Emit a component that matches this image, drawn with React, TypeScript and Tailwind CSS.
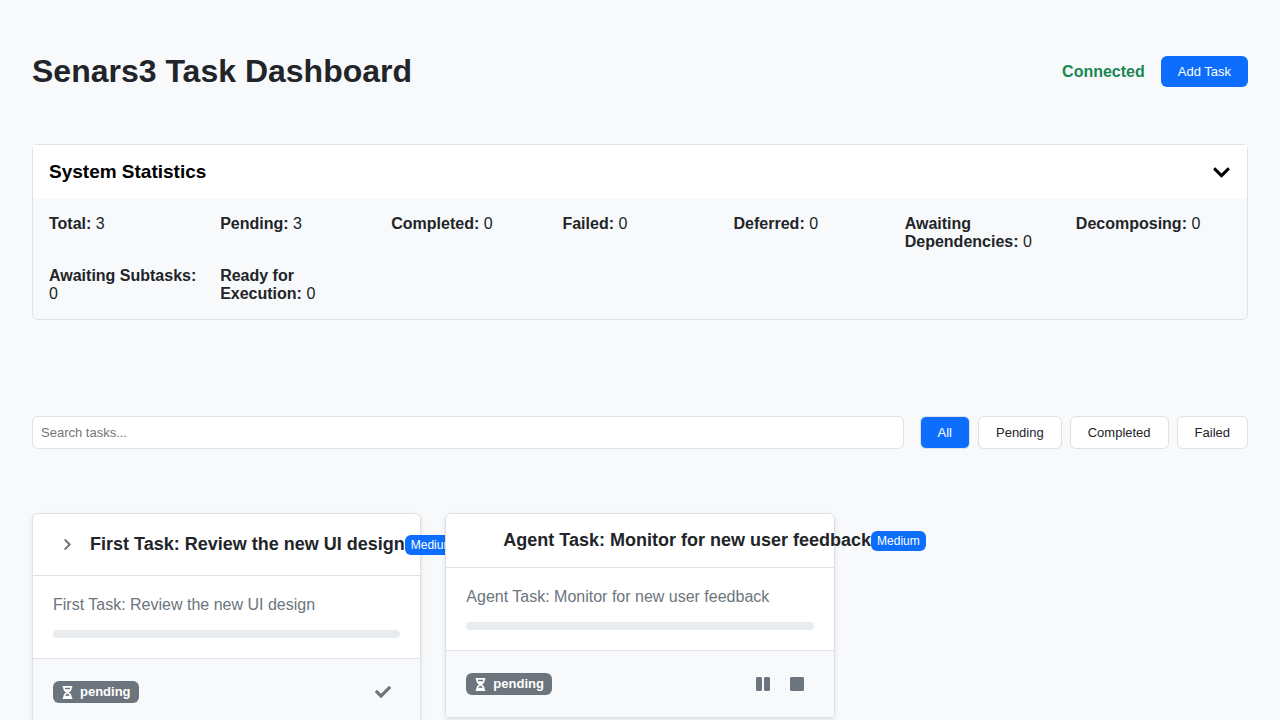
import { useState } from "react";
import {
  FaCheck,
  FaChevronDown,
  FaChevronRight,
  FaHourglassHalf,
  FaPause,
  FaStop,
} from "react-icons/fa";

const stats = [
  { label: "Total", value: 3 },
  { label: "Pending", value: 3 },
  { label: "Completed", value: 0 },
  { label: "Failed", value: 0 },
  { label: "Deferred", value: 0 },
  { label: "Awaiting Dependencies", value: 0 },
  { label: "Decomposing", value: 0 },
  { label: "Awaiting Subtasks", value: 0 },
  { label: "Ready for Execution", value: 0 },
];

const filters = ["All", "Pending", "Completed", "Failed"];

type Task = {
  title: string;
  priority: string;
  status: string;
  kind: "regular" | "agent";
};

const tasks: Task[] = [
  {
    title: "First Task: Review the new UI design",
    priority: "Medium",
    status: "pending",
    kind: "regular",
  },
  {
    title: "Agent Task: Monitor for new user feedback",
    priority: "Medium",
    status: "pending",
    kind: "agent",
  },
];

const iconButton = "flex size-[34px] items-center justify-center text-[#6c757d]";

function TaskCard({ task }: { task: Task }) {
  const agent = task.kind === "agent";
  return (
    <article className="relative min-w-0 rounded-md border border-[#dee2e6] bg-white shadow-[0_2px_4px_rgba(0,0,0,0.1)]">
      <header className="flex items-center border-b border-[#dee2e6] px-5 py-4">
        {agent ? (
          <span className="w-[37px] shrink-0" />
        ) : (
          <button
            type="button"
            aria-label="Expand subtasks"
            className="mr-2 flex h-[29px] w-[29px] shrink-0 items-center justify-center text-[13px] text-[#6c757d]"
          >
            <FaChevronRight />
          </button>
        )}
        <h3 className="text-[18px] leading-[21px] font-bold whitespace-nowrap">{task.title}</h3>
        <span className="shrink-0 rounded-md bg-[#0d6efd] px-1.5 py-[3px] text-[12px] leading-[14px] text-white">
          {task.priority}
        </span>
      </header>
      <div className="p-5">
        <p className="mb-4 leading-[18px] text-[#6c757d]">{task.title}</p>
        <div className="h-2 rounded bg-[#e9ecef]" />
      </div>
      <footer className="flex items-center justify-between border-t border-[#dee2e6] bg-[#f8f9fa] px-5 py-4">
        <span className="flex h-[22px] items-center gap-1.5 rounded-md bg-[#6c757d] px-2 text-[13px] font-bold text-white">
          <FaHourglassHalf />
          {task.status}
        </span>
        <div className="flex">
          {agent ? (
            <>
              <button type="button" aria-label="Pause" className={iconButton}>
                <FaPause />
              </button>
              <button type="button" aria-label="Stop" className={iconButton}>
                <FaStop />
              </button>
            </>
          ) : (
            <button type="button" aria-label="Complete" className={iconButton}>
              <FaCheck />
            </button>
          )}
        </div>
      </footer>
    </article>
  );
}

export default function App() {
  const [active, setActive] = useState("All");
  const [open, setOpen] = useState(true);

  return (
    <div className="min-h-screen bg-[#f8f9fa] p-8 font-['Liberation_Sans',Arial,sans-serif] text-[16px] leading-[18px] text-[#212529]">
      <header className="mb-[33px] flex items-center justify-between py-[21px]">
        <h1 className="text-[32px] leading-[37px] font-bold">Senars3 Task Dashboard</h1>
        <div className="flex items-center gap-4">
          <span className="font-bold text-[#198754]">Connected</span>
          <button
            type="button"
            className="rounded-md bg-[#0d6efd] px-[17px] py-2 text-[13px] leading-[15px] text-white"
          >
            Add Task
          </button>
        </div>
      </header>

      <section className="mb-24 rounded-md border border-[#dee2e6]">
        <button
          type="button"
          aria-expanded={open}
          onClick={() => setOpen(!open)}
          className="flex w-full items-center justify-between bg-white p-4 text-[19px] leading-[22px] font-bold text-black"
        >
          System Statistics
          <FaChevronDown />
        </button>
        {open && (
          <div className="grid grid-cols-[repeat(auto-fit,minmax(150px,1fr))] gap-4 p-4">
            {stats.map((s) => (
              <div key={s.label}>
                <strong>{s.label}:</strong> {s.value}
              </div>
            ))}
          </div>
        )}
      </section>

      <div className="mb-16 flex gap-4">
        <input
          type="text"
          aria-label="Search tasks"
          placeholder="Search tasks..."
          className="min-w-0 flex-1 rounded-md border border-[#dee2e6] bg-white px-2 text-[13px] leading-[15px] placeholder:text-[#757575]"
        />
        <div className="flex gap-2">
          {filters.map((f) => (
            <button
              key={f}
              type="button"
              onClick={() => setActive(f)}
              className={
                "rounded-md border border-[#dee2e6] px-[17px] py-2 text-[13px] leading-[15px] " +
                (f === active ? "bg-[#0d6efd] text-white" : "bg-white")
              }
            >
              {f}
            </button>
          ))}
        </div>
      </div>

      <main className="grid grid-cols-[repeat(auto-fill,minmax(350px,1fr))] items-start gap-6">
        {tasks.map((t) => (
          <TaskCard key={t.title} task={t} />
        ))}
      </main>
    </div>
  );
}
